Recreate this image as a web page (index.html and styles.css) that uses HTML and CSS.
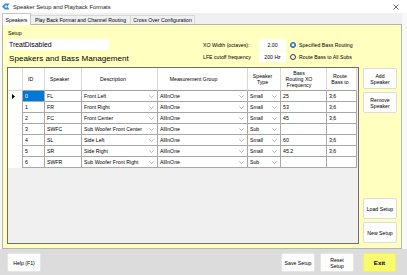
FILE: index.html
```html
<!DOCTYPE html>
<html lang="en">
<head>
    <meta charset="UTF-8">
    <meta name="viewport" content="width=device-width, initial-scale=1.0">
    <title>Speaker Setup and Playback Formats</title>
    <link rel="stylesheet" href="styles.css">
</head>
<body>
<div class="window">

    <div class="titlebar">
        <svg class="app-icon" width="8" height="7" viewBox="0 0 8 7">
            <path d="M0 3.5 L3 0.5 H7.5 L5.5 3.5 L7.5 6.5 H3 Z" fill="#3c8ad8"/>
            <circle cx="4" cy="3.5" r="1.3" fill="#d6ecff"/>
        </svg>
        <span class="title">Speaker Setup and Playback Formats</span>
        <svg class="close" width="6" height="6" viewBox="0 0 6 6">
            <path d="M0.5 0.5 L5.5 5.5 M5.5 0.5 L0.5 5.5" stroke="#444" stroke-width="0.8"/>
        </svg>
    </div>

    <div class="tabcontrol">
        <div class="tabstrip">
            <div class="tab active tab-speakers">Speakers</div>
            <div class="tab tab-playback">Play Back Format and Channel Routing</div>
            <div class="tab tab-crossover">Cross Over Configuration</div>
        </div>

        <div class="panel">
            <div class="panel-top">
                <div class="setup-box">
                    <div class="label">Setup</div>
                    <div class="textbox setup-name">TreatDisabled</div>
                    <h1 class="heading">Speakers and Bass Management</h1>
                </div>
                <div class="xo-box">
                    <span class="xo-label">XO Width (octaves):</span>
                    <span class="textbox small">2.00</span>
                    <span class="radio checked"></span>
                    <span class="radio-text">Specified Bass Routing</span>

                    <span class="xo-label">LFE cutoff frequency</span>
                    <span class="textbox small">200 Hz</span>
                    <span class="radio"></span>
                    <span class="radio-text">Route Bass to All Subs</span>
                </div>
            </div>

            <div class="panel-body">
                <div class="grid">
                    <table>
                        <colgroup>
                            <col class="c-rh"><col class="c-id"><col class="c-spk"><col class="c-desc">
                            <col class="c-meas"><col class="c-type"><col class="c-bass"><col class="c-route">
                        </colgroup>
                        <thead>
                            <tr>
                                <th class="rh"></th>
                                <th class="left">ID</th>
                                <th class="left">Speaker</th>
                                <th class="h-desc">Description</th>
                                <th class="h-meas">Measurement Group</th>
                                <th>Speaker<br>Type</th>
                                <th class="h-bass">Bass<br>Routing XO<br>Frequency</th>
                                <th>Route<br>Bass to</th>
                            </tr>
                        </thead>
                        <tbody id="rows"></tbody>
                    </table>
                </div>
                <div class="side">
                    <div class="group">
                        <button class="btn">Add<br>Speaker</button>
                        <button class="btn">Remove<br>Speaker</button>
                    </div>
                    <div class="group">
                        <button class="btn">Load Setup</button>
                        <button class="btn">New Setup</button>
                    </div>
                </div>
            </div>
        </div>
    </div>

    <div class="bottombar">
        <button class="btn bar-btn">Help (F1)</button>
        <span class="spacer"></span>
        <button class="btn bar-btn">Save Setup</button>
        <button class="btn bar-btn">Reset<br>Setup</button>
        <button class="btn bar-btn exit">Exit</button>
    </div>
</div>

<script>
    const speakers = [
        ["0", "FL", "Front Left", "AllInOne", "Small", "25", "3;6"],
        ["1", "FR", "Front Right", "AllInOne", "Small", "53", "3;6"],
        ["2", "FC", "Front Center", "AllInOne", "Small", "45", "3;6"],
        ["3", "SWFC", "Sub Woofer Front Center", "AllInOne", "Sub", "", ""],
        ["4", "SL", "Side Left", "AllInOne", "Small", "60", "3;6"],
        ["5", "SR", "Side Right", "AllInOne", "Small", "45.2", "3;6"],
        ["6", "SWFR", "Sub Woofer Front Right", "AllInOne", "Sub", "", ""]
    ];

    const chevron = '<svg class="chev" width="5" height="3" viewBox="0 0 5 3"><path d="M0.3 0.3 L2.5 2.6 L4.7 0.3" fill="none" stroke="#9a9a9a" stroke-width="0.7"/></svg>';

    function combo(text) {
        return '<td><div class="combo"><span>' + text + '</span>' + chevron + '</div></td>';
    }

    let html = "";
    speakers.forEach(function (s, i) {
        const arrow = i === 0 ? '<svg width="3" height="5" viewBox="0 0 3 5"><path d="M0 0 L3 2.5 L0 5 Z" fill="#000"/></svg>' : "";
        html += '<tr>' +
            '<td class="rh">' + arrow + '</td>' +
            '<td class="' + (i === 0 ? 'sel' : '') + '">' + s[0] + '</td>' +
            '<td>' + s[1] + '</td>' +
            combo(s[2]) +
            combo(s[3]) +
            combo(s[4]) +
            '<td>' + s[5] + '</td>' +
            '<td>' + s[6] + '</td>' +
            '</tr>';
    });
    document.getElementById("rows").innerHTML = html;
</script>
</body>
</html>
```

FILE: styles.css
```css
* {
    box-sizing: border-box;
}
body {
    margin: 0;
    width: 407px;
    height: 275px;
    overflow: hidden;
    font-family: "Liberation Sans", Arial, sans-serif;
    font-size: 5.2px;
    color: #000;
    background: #f8f8f8;
}
.window {
    display: flex;
    flex-direction: column;
    height: 275px;
}

/* title bar */
.titlebar {
    height: 13px;
    background: #fff;
    display: flex;
    align-items: center;
    gap: 3px;
    padding: 0 8px 0 2px;
    font-size: 5.8px;
    color: #222;
}
.titlebar .title {
    flex: 1;
}

/* tabs */
.tabcontrol {
    height: 236px;
    margin: 0 5px 0 2px;
    display: flex;
    flex-direction: column;
}
.tabstrip {
    height: 11px;
    display: flex;
    align-items: flex-end;
    background: #f0f0f0;
}
.tab {
    height: 9px;
    display: flex;
    align-items: center;
    justify-content: center;
    border: 1px solid #d9d9d9;
    border-bottom: none;
    background: #f0f0f0;
    margin-left: -1px;
    white-space: nowrap;
}
.tab.active {
    height: 12px;
    margin-left: 0;
    margin-bottom: -1px;
    background: #fff;
    border-color: #c4c4c4;
    position: relative;
    z-index: 1;
}
.tab-speakers { width: 29px; }
.tab-playback { width: 101px; }
.tab-crossover { width: 65px; }

/* yellow panel */
.panel {
    flex: 1;
    display: flex;
    flex-direction: column;
    background: #ffffc0;
    border: 1px solid #b4b4b4;
    padding: 0 4px 4px 4px;
}
.panel-top {
    height: 42px;
    display: flex;
}
.setup-box {
    width: 196px;
    padding-top: 4px;
}
.label {
    height: 8px;
    line-height: 8px;
    padding-left: 1px;
}
.textbox {
    background: #fff;
    display: flex;
    align-items: center;
}
.setup-name {
    width: 102px;
    height: 11px;
    margin-top: 2px;
    padding-left: 2px;
    font-size: 6.9px;
}
.heading {
    margin: 2px 0 0 2px;
    height: 13px;
    line-height: 13px;
    font-size: 8.1px;
    font-weight: normal;
}
.xo-box {
    margin-top: 14px;
    display: grid;
    grid-template-columns: 56px 27px 10px auto;
    grid-auto-rows: 11px;
    row-gap: 1px;
    align-items: center;
}
.textbox.small {
    height: 11px;
    justify-content: center;
}
.radio {
    width: 6px;
    height: 6px;
    margin-left: 4px;
    border-radius: 50%;
    border: 0.8px solid #333;
    background: #fff;
}
.radio.checked {
    border: 1.6px solid #0a5cc0;
    background: #fff;
    box-shadow: inset 0 0 0 0.6px #0a5cc0;
}
.radio-text {
    padding-left: 3px;
}

/* data grid */
.panel-body {
    flex: 1;
    display: flex;
    gap: 4px;
}
.grid {
    flex: 1;
    background: #f0f0f0;
    border: 1px solid #6e6e6e;
    overflow: hidden;
}
table {
    width: 349px;
    table-layout: fixed;
    border-collapse: separate;
    border-spacing: 0;
}
.c-rh { width: 15px; }
.c-id { width: 22px; }
.c-spk { width: 37px; }
.c-desc { width: 76px; }
.c-meas { width: 90px; }
.c-type { width: 33px; }
.c-bass { width: 46px; }
.c-route { width: 30px; }
th {
    height: 23px;
    font-weight: normal;
    line-height: 6px;
    background: #fff;
    border-right: 1px solid #d8d8d8;
    border-bottom: 1px solid #a0a0a0;
    padding: 0 3px 0 0;
    text-align: center;
}
th.left {
    text-align: left;
    padding-left: 5px;
}
th.h-desc { padding-right: 13px; }
th.h-meas { padding-right: 18px; }
th.h-bass { padding-right: 9px; }
td {
    height: 11px;
    padding: 0 2px;
    background: #fff;
    border-right: 1px solid #a8a8a8;
    border-bottom: 1px solid #a8a8a8;
    white-space: nowrap;
    overflow: hidden;
    line-height: 10px;
}
td.rh {
    border-bottom: none;
    padding-left: 4px;
}
th.rh {
    border-bottom-color: #d8d8d8;
}
td.sel {
    background: #0078d7;
    color: #fff;
}
.combo {
    display: flex;
    align-items: center;
    justify-content: space-between;
    padding-right: 1px;
}
.chev {
    flex-shrink: 0;
}

/* buttons */
.side {
    width: 34px;
    display: flex;
    flex-direction: column;
    justify-content: space-between;
    padding: 1px 0 1px 0;
}
.group {
    display: flex;
    flex-direction: column;
    gap: 3px;
}
.btn {
    height: 21px;
    padding: 0;
    font-family: "Liberation Sans", Arial, sans-serif;
    font-size: 5.2px;
    line-height: 6px;
    color: #000;
    background: #fdfdfd;
    border: 1px solid #dcdcdc;
    border-radius: 2px;
}
.bottombar {
    flex: 1;
    display: flex;
    align-items: flex-start;
    gap: 5px;
    padding: 4px 11px 0 7px;
    background: #dcdcdc;
}
.bar-btn {
    width: 34px;
    height: 19px;
    border-color: #e6e6e6;
}
.spacer {
    flex: 1;
}
.exit {
    width: 33px;
    margin-left: 4px;
    background: #fafa6e;
    border-color: #f0f060;
    font-weight: bold;
    font-size: 6.2px;
}
```
